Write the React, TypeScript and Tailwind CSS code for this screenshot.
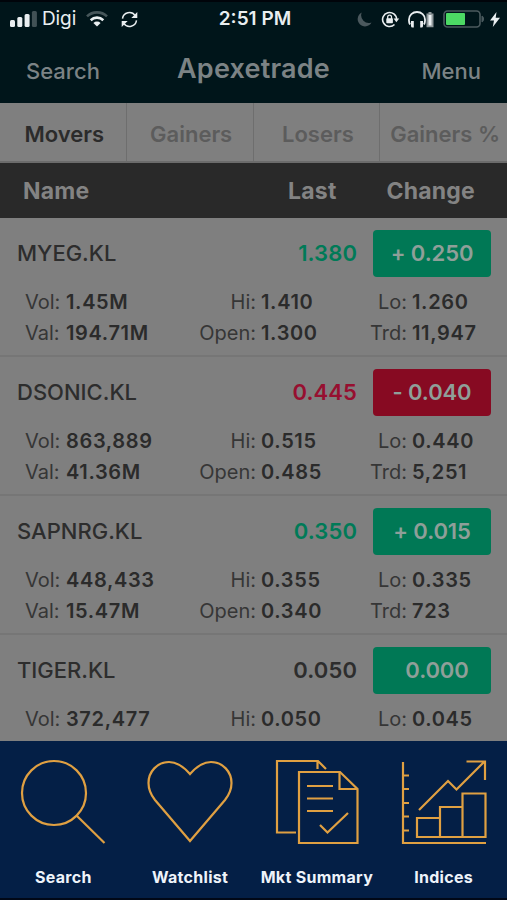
import type { ReactNode } from 'react';

type Stock = {
    name: string;
    last: string;
    lastColor: string;
    change: string;
    badge: string;
    vol: string;
    val?: string;
    hi: string;
    open?: string;
    lo: string;
    trd?: string;
};

const stocks: Stock[] = [
    { name: 'MYEG.KL', last: '1.380', lastColor: 'text-[#007a57]', change: '+ 0.250', badge: 'bg-[#007855]', vol: '1.45M', val: '194.71M', hi: '1.410', open: '1.300', lo: '1.260', trd: '11,947' },
    { name: 'DSONIC.KL', last: '0.445', lastColor: 'text-[#970f30]', change: '- 0.040', badge: 'bg-[#870a22]', vol: '863,889', val: '41.36M', hi: '0.515', open: '0.485', lo: '0.440', trd: '5,251' },
    { name: 'SAPNRG.KL', last: '0.350', lastColor: 'text-[#007a57]', change: '+ 0.015', badge: 'bg-[#007855]', vol: '448,433', val: '15.47M', hi: '0.355', open: '0.340', lo: '0.335', trd: '723' },
    { name: 'TIGER.KL', last: '0.050', lastColor: 'text-[#2d2d2d]', change: '0.000', badge: 'bg-[#007855] pl-[10px]', vol: '372,477', hi: '0.050', lo: '0.045' },
];

const tabs = ['Movers', 'Gainers', 'Losers', 'Gainers %'];

function StatusBar() {
    return (
        <div className="grid h-[34px] grid-cols-[1fr_auto_1fr] items-center text-[#e9eef0]">
            <div className="flex items-center pl-[10px]">
                <svg width="27" height="16" viewBox="0 0 27 16" fill="currentColor">
                    <rect x="0" y="9" width="5" height="7" rx="1.5" />
                    <rect x="7.3" y="6" width="5" height="10" rx="1.5" />
                    <rect x="14.6" y="3" width="5" height="13" rx="1.5" />
                    <rect x="21.9" y="0" width="5" height="16" rx="1.5" opacity="0.28" />
                </svg>
                <span className="ml-[5px] text-[19px] tracking-[-0.1px]">Digi</span>
                <svg className="ml-[10px]" width="22" height="16" viewBox="0 0 22 16" fill="none" stroke="currentColor" strokeWidth="2.6">
                    <path d="M1 5.4a14.4 14.4 0 0 1 20 0" opacity="0.3" />
                    <path d="M4.7 9.2a9.1 9.1 0 0 1 12.6 0" />
                    <path d="M7.4 11.9a5.2 5.2 0 0 1 7.2 0L11 15.6z" fill="currentColor" stroke="none" />
                </svg>
                <svg className="ml-[13px]" width="17" height="17" viewBox="0 0 17 17" fill="none" stroke="currentColor" strokeWidth="1.5">
                    <path d="M1.5 7.6a7 7 0 0 1 12.7-3" />
                    <path d="M15.5 9.4a7 7 0 0 1-12.7 3" />
                    <path d="M16.3 1v6h-6zM.7 16v-6h6z" fill="currentColor" stroke="none" />
                </svg>
            </div>
            <span className="pl-[3px] text-[19px] font-semibold">2:51 PM</span>
            <div className="flex items-center justify-end pr-[7px]">
                <svg width="15" height="15" viewBox="0 0 15 15" fill="#4a585d">
                    <path d="M4.7.6a7.3 7.3 0 1 0 9.8 9.8A7.6 7.6 0 0 1 4.7.6z" />
                </svg>
                <svg className="ml-[9px]" width="19" height="17" viewBox="0 0 19 17" fill="none" stroke="currentColor" strokeWidth="1.6">
                    <path d="M15.6 8.5A7 7 0 1 0 13.5 13.5" />
                    <path d="M12.6 7.6h5.6l-2.8 3.6z" fill="currentColor" stroke="none" />
                    <path d="M6.7 8V6a1.9 1.9 0 0 1 3.8 0v2" strokeWidth="1.3" />
                    <rect x="5.3" y="7.3" width="6.6" height="5" rx="0.7" fill="currentColor" stroke="none" />
                </svg>
                <svg className="ml-[8px]" width="27" height="17" viewBox="0 0 27 17" fill="none" stroke="currentColor" strokeWidth="1.8">
                    <path d="M2 13.5C.6 11 1 9.5 1 8.5a8 7.5 0 0 1 16 0c0 1 .4 2.5-1 5" />
                    <path d="M3 10h2.8v6.5H4.5A1.5 1.5 0 0 1 3 15zM12.2 10H15v5a1.5 1.5 0 0 1-1.5 1.5h-1.3z" fill="currentColor" stroke="none" />
                    <path d="M20.5 1h3v1.500h2V16.300h-7V2.500h2z" fill="#8f989b" stroke="none" />
                    <rect x="20.5" y="4" width="3" height="10.5" fill="currentColor" stroke="none" />
                </svg>
                <svg className="ml-[8px]" width="42" height="18" viewBox="0 0 42 18" fill="none">
                    <rect x="1" y="1" width="36" height="16" rx="3.5" stroke="#4b5a5e" strokeWidth="1.6" />
                    <rect x="3" y="3" width="19" height="12" rx="1" fill="#4cd964" />
                    <path d="M39 6c2 .8 2 5.2 0 6z" fill="#4b5a5e" stroke="#4b5a5e" />
                </svg>
                <svg className="ml-[5px]" width="10" height="15" viewBox="0 0 10 15" fill="currentColor">
                    <path d="M6.5 0L0 8.5h4L2.8 15L10 5.8H5.7z" />
                </svg>
            </div>
        </div>
    );
}

function Figure({ children }: { children: ReactNode }) {
    return <b className="font-semibold tracking-[0.65px] text-[#2b2b2b]">{children}</b>;
}

function StockRow({ stock }: { stock: Stock }) {
    return (
        <div className="h-[139px] shrink-0 border-b-2 border-[#767676] pt-[12px]">
            <div className="flex h-[47px] items-center pl-[17px] pr-[16px] text-[22px] font-medium">
                <span className="flex-1 text-[#2d2d2d]">{stock.name}</span>
                <span className={`mr-[16px] font-semibold tracking-[0.1px] ${stock.lastColor}`}>{stock.last}</span>
                <span className={`flex h-[47px] w-[118px] items-center justify-center rounded-[4px] font-semibold tracking-[-0.1px] text-[#8f9f99] ${stock.badge}`}>
                    {stock.change}
                </span>
            </div>
            <div className="mt-[10px] grid grid-cols-[41px_133px_62px_89px_62px_1fr] gap-y-[1px] pl-[25px] text-[20px] leading-[30px] text-[#363636]">
                <span>Vol:</span>
                <Figure>{stock.vol}</Figure>
                <span className="pr-[5px] text-right">Hi:</span>
                <Figure>{stock.hi}</Figure>
                <span className="pr-[5px] text-right">Lo:</span>
                <Figure>{stock.lo}</Figure>
                {stock.val && (
                    <>
                        <span>Val:</span>
                        <Figure>{stock.val}</Figure>
                        <span className="pr-[5px] text-right">Open:</span>
                        <Figure>{stock.open}</Figure>
                        <span className="pr-[5px] text-right">Trd:</span>
                        <Figure>{stock.trd}</Figure>
                    </>
                )}
            </div>
        </div>
    );
}

function MenuItem({ label, children }: { label: string; children: ReactNode }) {
    return (
        <div className="flex flex-col items-center pt-[18px] text-[#e0a042]">
            <svg width="86" height="86" viewBox="0 0 86 86" fill="none" stroke="currentColor" strokeWidth="2.2">
                {children}
            </svg>
            <span className="mt-[20px] whitespace-nowrap text-[16px] font-bold leading-[24px] tracking-[0.3px] text-[#eef3fa]">{label}</span>
        </div>
    );
}

export default function App() {
    return (
        <div className="flex h-[900px] w-[507px] flex-col overflow-hidden bg-[#7f7f7f] font-['Inter','Liberation_Sans',sans-serif]">
            {/* Header */}
            <header className="h-[103px] shrink-0 border-t-2 border-[#00040a] bg-[#00151a]">
                <StatusBar />
                <div className="grid grid-cols-[1fr_auto_1fr] items-center px-[26px] pt-[3px] text-[#7c8385]">
                    <span className="pt-[5px] text-[22px] font-medium">Search</span>
                    <span className="text-[27px] font-semibold leading-[60px] tracking-[0.2px]">Apexetrade</span>
                    <span className="pt-[5px] text-right text-[22px] font-medium">Menu</span>
                </div>
            </header>

            {/* Tabs */}
            <nav className="grid h-[60px] shrink-0 grid-cols-4 border-b-2 border-[#6b6b6b] text-[22px] font-semibold">
                {tabs.map((tab, i) => (
                    <span
                        key={tab}
                        className={`flex items-center justify-center whitespace-nowrap border-[#6e6e6e] pt-[5px] pl-[3px] ${i < 3 ? 'border-r' : ''} ${i > 0 ? 'text-[#5c5c5c]' : 'text-[#2b2b2b]'}`}
                    >
                        {tab}
                    </span>
                ))}
            </nav>

            {/* Column titles */}
            <div className="flex h-[55px] shrink-0 items-center bg-[#292929] pl-[23px] pr-[32px] pt-px text-[23px] font-bold tracking-[0.2px] text-[#838383]">
                <span className="flex-1">Name</span>
                <span className="mr-[50px]">Last</span>
                <span>Change</span>
            </div>

            {/* Stock list */}
            <main className="flex min-h-0 flex-1 flex-col overflow-hidden">
                {stocks.map((stock) => (
                    <StockRow key={stock.name} stock={stock} />
                ))}
            </main>

            {/* Bottom menu */}
            <footer className="grid h-[159px] shrink-0 grid-cols-4 border-b-2 border-[#010817] bg-[#041f46]">
                <MenuItem label="Search">
                    <circle cx="34" cy="34" r="32" />
                    <path d="M56.5 56.5L84.5 84" />
                </MenuItem>
                <MenuItem label="Watchlist">
                    <path d="M43 15C35 6 28 3 22 3C10 3 1.5 13 1.5 24C1.5 31 4 36 8 41L43 82L78 41C82 36 84.5 31 84.5 24C84.5 13 76 3 64 3C58 3 51 6 43 15z" />
                </MenuItem>
                <MenuItem label="Mkt Summary">
                    <path d="M22 73.5H3V2H44L52 10M43.5 2v8" />
                    <path d="M25 13H66L83.5 30V84H25z" />
                    <path d="M65.5 13V30H83.5M33 27H59M33 39.5H59M33 52H59M46 66L53.5 73.5L74 54" />
                </MenuItem>
                <MenuItem label="Indices">
                    <path d="M2 3V84H85M2 16.5H8M2 30H8M2 44H8M2 57.5H8M2 71.5H8" />
                    <path d="M16 78V59H39V48H61.5V34.5H84.5V78zM39 59V78M61.5 48V78" />
                    <path d="M18 51L47 22L55.5 30.5L83.5 2.5M65.5 2.5H84V21" />
                </MenuItem>
            </footer>
        </div>
    );
}
